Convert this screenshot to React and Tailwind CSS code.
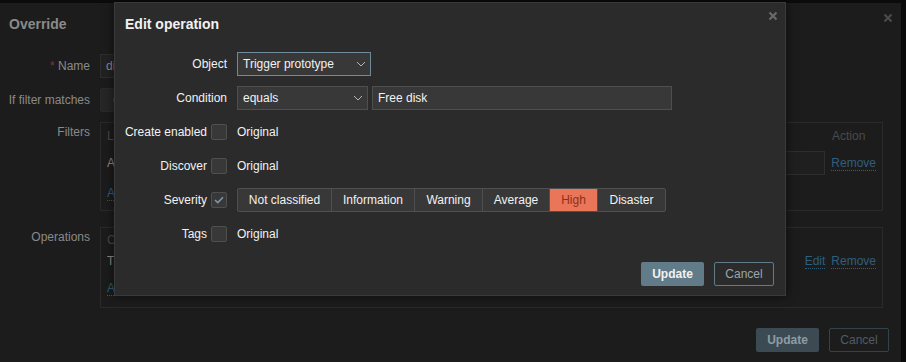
import React from "react";

const F = { fontFamily: '"Liberation Sans", Arial, sans-serif' };

function XIcon({ color = "#5a5a5a" }) {
  return (
    <svg width="10" height="10" viewBox="0 0 10 10">
      <path d="M1.5 1.5 L8.5 8.5 M8.5 1.5 L1.5 8.5" stroke={color} strokeWidth="2.2" />
    </svg>
  );
}

function Chevron() {
  return (
    <svg width="10" height="6" viewBox="0 0 10 6" className="shrink-0">
      <path d="M1 1 L5 5 L9 1" stroke="#b8b8b8" strokeWidth="1" fill="none" />
    </svg>
  );
}

function Checkbox({ checked }) {
  return (
    <div className="w-4 h-4 shrink-0 border border-[#4f4f4f] bg-[#383838] rounded-[2px] flex items-center justify-center">
      {checked && (
        <svg width="10" height="8" viewBox="0 0 10 8">
          <path d="M1 4 L3.8 6.6 L9 1.2" stroke="#7b97a8" strokeWidth="1.6" fill="none" />
        </svg>
      )}
    </div>
  );
}

function DimLink({ children }) {
  return (
    <span className="text-[#2f5f7d] border-b border-dotted border-[#2f5f7d] leading-[14px]">{children}</span>
  );
}

function Clip({ w, children, className = "" }) {
  return <span className={"inline-block overflow-hidden whitespace-nowrap align-top " + className} style={{ width: w }}>{children}</span>;
}

function Background() {
  return (
    <div className="mt-[3px] w-[901px] h-[400px] bg-[#1c1c1c] flex flex-col text-[12px] text-[#8a8a8a]">
      <div className="flex items-start justify-between pl-[9px] pr-[8px] pt-[12px] h-[33px]">
        <div className="text-[14px] font-bold leading-[18px] text-[#8a8a8a]">Override</div>
        <div className="mt-[-2px]"><XIcon color="#4a4a4a" /></div>
      </div>
      <div className="mt-[18px] flex flex-col gap-[10px]">
        <div className="flex items-center h-6">
          <div className="w-[90px] text-right"><span className="text-[#7a3a3a]">*</span> Name</div>
          <div className="ml-[10px] h-6 w-[300px] border border-[#2e2e2e] bg-[#222] flex items-center px-[5px]">
            <Clip w={8}>disk</Clip>
          </div>
        </div>
        <div className="flex items-center h-6">
          <div className="w-[90px] text-right">If filter matches</div>
          <div className="ml-[10px] h-6 w-[240px] flex items-center rounded-[2px] bg-[#262626] border border-[#2a2a2a]">
            <span className="pl-[12px] text-[#3d6a86]"><Clip w={2}>Continue overrides</Clip></span>
          </div>
        </div>
        <div className="flex items-start">
          <div className="w-[90px] text-right leading-[14px] mt-[3px]">Filters</div>
          <div className="ml-[10px] w-[783px] h-[89px] border border-[#2a2a2a] px-[6px] pt-[6px] flex flex-col">
            <div className="flex justify-between text-[#4a4a4a] h-[14px] leading-[14px]">
              <Clip w={7}>Label</Clip>
              <span className="w-[44px]">Action</span>
            </div>
            <div className="flex items-center h-6 mt-[8px]">
              <Clip w={7}>A</Clip>
              <div className="flex-1" />
              <div className="w-[260px] h-6 border border-[#2e2e2e] bg-[#1f1f1f]" />
              <span className="ml-[6px]"><DimLink>Remove</DimLink></span>
            </div>
            <div className="mt-[11px] leading-[14px]"><DimLink><Clip w={7}>Add</Clip></DimLink></div>
          </div>
        </div>
        <div className="flex items-start mt-[6px]">
          <div className="w-[90px] text-right leading-[14px] mt-[3px]">Operations</div>
          <div className="ml-[10px] w-[783px] h-[81px] border border-[#2a2a2a] px-[6px] pt-[5px] flex flex-col">
            <div className="flex justify-between text-[#4a4a4a] h-[14px] leading-[14px]">
              <Clip w={7}>Condition</Clip>
            </div>
            <div className="flex items-center h-[14px] mt-[7px] leading-[14px]">
              <Clip w={7}>Trigger prototype equals Free disk</Clip>
              <div className="flex-1" />
              <DimLink>Edit</DimLink>
              <span className="ml-[6px]"><DimLink>Remove</DimLink></span>
            </div>
            <div className="mt-[13px] leading-[14px]"><DimLink><Clip w={7}>Add</Clip></DimLink></div>
          </div>
        </div>
        <div className="flex justify-end gap-[10px] pr-[12px] mt-[10px]">
          <div className="w-[63px] h-6 bg-[#3c4b53] text-[#8e9ca3] font-bold flex items-center justify-center rounded-[2px]">Update</div>
          <div className="w-[60px] h-6 border border-[#34434b] text-[#4f5c63] flex items-center justify-center rounded-[2px]">Cancel</div>
        </div>
      </div>
    </div>
  );
}

function Row({ label, children, labelRight }) {
  return (
    <div className="flex items-center h-6">
      <div className="w-[102px] flex items-center justify-end gap-[4px] text-[#f2f2f2] whitespace-nowrap">
        <span>{label}</span>
        {labelRight}
      </div>
      <div className="ml-[10px] flex items-center">{children}</div>
    </div>
  );
}

const sev = [
  ["Not classified", 94],
  ["Information", 83],
  ["Warning", 68],
  ["Average", 67],
  ["High", 48],
  ["Disaster", 68],
];

function Modal() {
  return (
    <div className="absolute left-[114px] top-[2px] w-[672px] h-[294px] bg-[#2b2b2b] border border-[#3a3a3a] shadow-[0_0_10px_rgba(0,0,0,0.6)] text-[12px] text-[#f2f2f2] flex flex-col">
      <div className="flex items-start justify-between pl-[10px] pr-[7px] pt-[12px] h-[36px]">
        <div className="text-[14px] font-bold leading-[18px] text-[#f2f2f2]">Edit operation</div>
        <div className="mt-[-4px]"><XIcon color="#6a6a6a" /></div>
      </div>
      <div className="pl-[10px] mt-[13px] flex flex-col gap-[10px]">
        <Row label="Object">
          <div className="w-[134px] h-6 border border-[#6f8a9a] bg-[#383838] flex items-center justify-between pl-[5px] pr-[4px]">
            <span>Trigger prototype</span>
            <Chevron />
          </div>
        </Row>
        <Row label="Condition">
          <div className="w-[131px] h-6 border border-[#4f4f4f] bg-[#383838] flex items-center justify-between pl-[5px] pr-[4px]">
            <span>equals</span>
            <Chevron />
          </div>
          <div className="ml-[4px] w-[300px] h-6 border border-[#4f4f4f] bg-[#383838] flex items-center px-[5px]">Free disk</div>
        </Row>
        <Row label="Create enabled" labelRight={<Checkbox />}>
          <span>Original</span>
        </Row>
        <Row label="Discover" labelRight={<Checkbox />}>
          <span>Original</span>
        </Row>
        <Row label="Severity" labelRight={<Checkbox checked />}>
          <div className="flex h-6 border border-[#4f4f4f] rounded-[2px] bg-[#383838] overflow-hidden">
            {sev.map(([t, w], i) => (
              <div
                key={t}
                style={{ width: w - (i === 0 ? 1 : 0) }}
                className={
                  "flex items-center justify-center h-full " +
                  (i > 0 ? "border-l border-[#4f4f4f] " : "") +
                  (t === "High" ? "bg-[#e97659] text-[#8e2f1c]" : "text-[#f2f2f2]")
                }
              >
                {t}
              </div>
            ))}
          </div>
        </Row>
        <Row label="Tags" labelRight={<Checkbox />}>
          <span>Original</span>
        </Row>
      </div>
      <div className="flex justify-end gap-[10px] pr-[11px] mt-[16px]">
        <div className="w-[63px] h-6 bg-[#627b88] text-[#f2f2f2] font-bold flex items-center justify-center rounded-[2px]">Update</div>
        <div className="w-[60px] h-6 border border-[#627b88] text-[#9aa6ad] flex items-center justify-center rounded-[2px]">Cancel</div>
      </div>
    </div>
  );
}

export default function App() {
  return (
    <div style={F} className="relative w-[906px] h-[362px] bg-[#0b0b0b] overflow-hidden">
      <Background />
      <Modal />
    </div>
  );
}
